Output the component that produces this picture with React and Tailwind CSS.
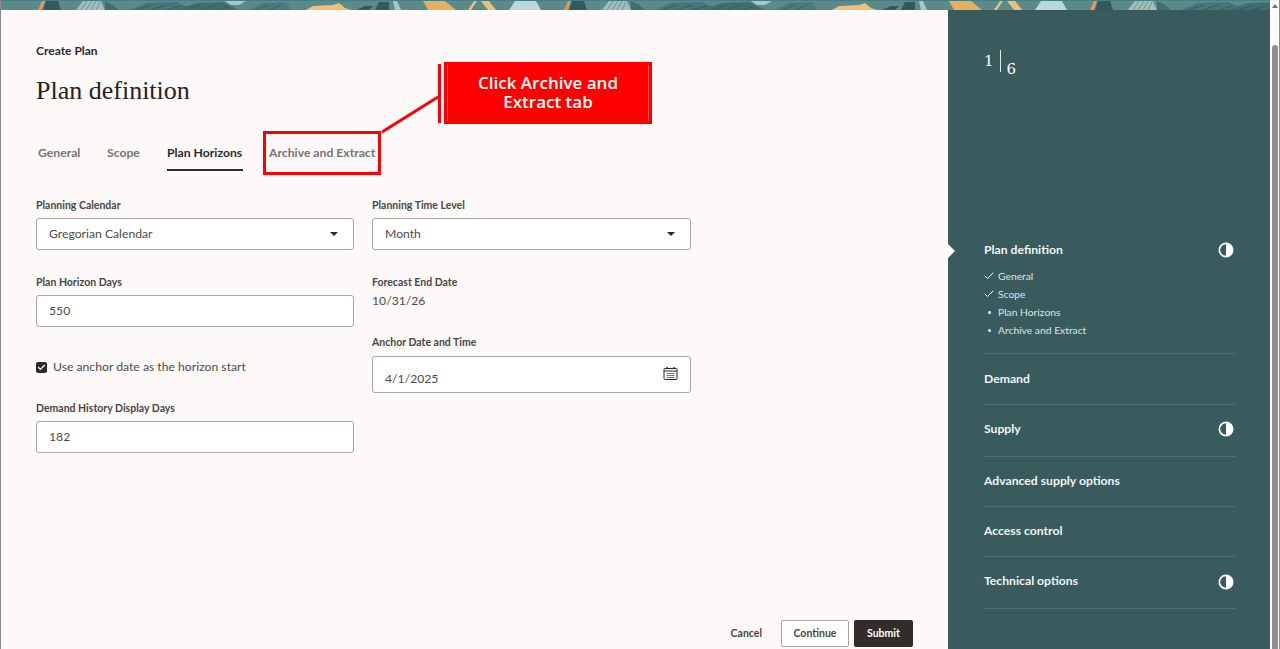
import { Check } from 'lucide-react';

const sans = "font-['Lato','Open_Sans',sans-serif]";

// the banner art repeats every 526px
function BannerTile({ x }) {
  return (
    <g transform={`translate(${x} 0)`}>
      <path d="M37 10 L41 1 L44 1 L41 10Z" fill="#e8935a" />
      <path d="M42 10 L45 1 L57 1 L60 10Z" fill="#2f5a5e" />
      <path d="M75 10 L82 1 L100 1 L104 10Z" fill="#a3bdbb" />
      <path d="M80 10 L86 1M85 10 L91 1M90 10 L95 1M95 10 L99 2" stroke="#6d9190" strokeWidth="1" />
      <path d="M104 1 L112 5 L118 10 L104 10Z" fill="#3f6e70" />
      <path d="M128 10 L145 3 L175 2 L195 10Z" fill="#46767a" />
      <path d="M135 10 L150 5M150 10 L165 5M165 10 L180 6" stroke="#2f5f62" strokeWidth="1" />
      <path d="M175 10 L195 3 L222 2 L238 10Z" fill="#3f6e70" />
      <path d="M185 10 L200 5M200 10 L215 5M215 10 L228 6" stroke="#2f5f62" strokeWidth="1" />
      <path d="M224 1 L245 1 L238 5 L230 5Z" fill="#a9c6c6" />
      <path d="M248 10 L262 3 L285 2 L290 10Z" fill="#4b7a7c" />
      <path d="M255 10 L268 5M268 10 L280 5" stroke="#33666a" strokeWidth="1" />
      <path d="M305 10 L312 6 L332 5 L338 3 L344 8 L350 10Z" fill="#edc07d" />
      <path d="M355 10 L364 6 L372 6 L368 10Z" fill="#2f5a5e" />
      <path d="M374 10 L378 2 L388 2 L388 10Z" fill="#2f5a5e" />
      <path d="M392 1 L396 1 L400 10 L394 10Z" fill="#a9c6c6" />
      <path d="M422 1 L444 1 L455 10 L427 10Z" fill="#e5b15f" />
      <path d="M467 10 L473 1 L476 1 L470 10Z" fill="#edc07d" />
      <path d="M480 1 L488 1 L495 10 L487 10Z" fill="#edc07d" />
      <path d="M508 10 L514 1 L535 1 L540 10Z" fill="#bcd7da" />
    </g>
  );
}

function Banner() {
  return (
    <svg width="1270" height="10" viewBox="0 0 1270 10" className="block shrink-0">
      <rect width="1270" height="10" fill="#5b8a88" />
      <BannerTile x={0} />
      <BannerTile x={526} />
      <BannerTile x={1052} />
      <rect width="1270" height="1" fill="#467f86" />
    </svg>
  );
}

function Field({ label, children, className = '' }) {
  return (
    <div className={className}>
      <div className="text-[10.5px] leading-[14px] font-bold text-[#4a4643] whitespace-nowrap">{label}</div>
      {children}
    </div>
  );
}

function InputBox({ children, className = 'h-[32px] mt-[6px]' }) {
  return (
    <div className={`w-full flex items-center justify-between pl-[12px] pr-[15px] bg-white border border-[#a9a5a1] rounded-[3px] text-[12.2px] text-[#4f4b48] ${className}`}>
      {children}
    </div>
  );
}

function Caret() {
  return <div className="w-0 h-0 border-l-[4px] border-r-[4px] border-t-[4px] border-l-transparent border-r-transparent border-t-[#2c2926]" />;
}

function Halfmoon() {
  return (
    <svg width="16" height="16" viewBox="0 0 16 16">
      <circle cx="8" cy="8" r="7.5" fill="#fff" />
      <path d="M8 2.2 A5.8 5.8 0 0 0 8 13.8Z" fill="#395b5e" />
    </svg>
  );
}

function Step({ title, half, className }) {
  return (
    <div className={`flex items-center justify-between border-b border-[#4d7174] pr-[1px] ${className}`}>
      <span className="ml-[1px] text-[12.2px] font-bold text-[#f1f5f4]">{title}</span>
      {half && <Halfmoon />}
    </div>
  );
}

const subSteps = [
  { name: 'General', done: true },
  { name: 'Scope', done: true },
  { name: 'Plan Horizons' },
  { name: 'Archive and Extract' },
];

export default function App() {
  return (
    <div className={`relative flex w-[1280px] h-[649px] overflow-hidden bg-white ${sans}`}>
      <div className="flex flex-col w-[1270px] h-full border-l border-[#8a8a8a]">
        <Banner />
        <div className="flex flex-1 min-h-0">
          {/* main form */}
          <main className="relative w-[947px] bg-[#fcf9f8] pl-[35px] pt-[34px]">
            <div className="text-[12px] leading-[14px] font-bold text-[#2c2926]">Create Plan</div>
            <h1 className="mt-[18px] font-['Liberation_Serif',serif] text-[26px] leading-[30px] text-[#24211f]">Plan definition</h1>

            <div className="flex mt-[29px] text-[12.2px] font-bold text-[#77736f] h-[36px]">
              <span className="ml-[2px] w-[69px] pt-[9px]">General</span>
              <span className="w-[60px] pt-[9px]">Scope</span>
              <span className="w-[76px] pt-[9px] text-[#2c2926] border-b-2 border-[#2c2926] whitespace-nowrap">Plan Horizons</span>
              <span className="ml-[26px] pt-[9px] whitespace-nowrap">Archive and Extract</span>
            </div>

            <div className="flex gap-[18px] mt-[27px]">
              <div className="w-[318px]">
                <Field label="Planning Calendar">
                  <InputBox>Gregorian Calendar<Caret /></InputBox>
                </Field>
                <Field label="Plan Horizon Days" className="mt-[25px]">
                  <InputBox>550</InputBox>
                </Field>
                <label className="flex items-center gap-[6px] mt-[32px] text-[12.2px] leading-[16px] text-[#4f4b48]">
                  <span className="flex items-center justify-center w-[11px] h-[11px] rounded-[2px] bg-[#2c2926]">
                    <Check size={9} strokeWidth={3.5} color="#fff" />
                  </span>
                  Use anchor date as the horizon start
                </label>
                <Field label="Demand History Display Days" className="mt-[26px]">
                  <InputBox>182</InputBox>
                </Field>
              </div>

              <div className="w-[319px]">
                <Field label="Planning Time Level">
                  <InputBox>Month<Caret /></InputBox>
                </Field>
                <Field label="Forecast End Date" className="mt-[25px]">
                  <div className="mt-[4px] text-[12.2px] leading-[16px] text-[#4f4b48]">10/31/26</div>
                </Field>
                <Field label="Anchor Date and Time" className="mt-[26px]">
                  <InputBox className="h-[37px] mt-[7px] !items-start !pr-[12px]">
                    <span className="mt-[13px]">4/1/2025</span>
                    <svg width="15" height="15" viewBox="0 0 15 15" className="mt-[9px]" fill="none" stroke="#2c2926">
                      <rect x="1" y="2.5" width="13" height="11" rx="1" />
                      <path d="M4 1v2M11 1v2" strokeWidth="1.4" />
                      <path d="M1 5h13" />
                      <path d="M3.5 7.5h8M3.5 9.5h8M3.5 11.5h8" stroke="#77726e" />
                    </svg>
                  </InputBox>
                </Field>
              </div>
            </div>

            <div className="absolute right-[35px] bottom-[2px] flex items-center text-[10.5px] font-bold text-[#4a4643]">
              <span className="mr-[19px]">Cancel</span>
              <span className="flex items-center justify-center w-[68px] h-[27px] mr-[5px] bg-white border border-[#a9a5a1] rounded-[2px]">Continue</span>
              <span className="flex items-center justify-center w-[59px] h-[27px] bg-[#312d2a] text-white rounded-[2px]">Submit</span>
            </div>
          </main>

          {/* wizard panel */}
          <aside className="relative flex-1 bg-[#395b5e] pl-[35px] pr-[35px]">
            <div className="flex items-start h-[32px] mt-[40px] text-white font-['DejaVu_Serif',serif] text-[15px]">
              <span className="leading-[24px] mt-[-1px] ml-[1px]">1</span>
              <span className="w-px h-[22px] bg-[#dfe7e6] mx-[6px]" />
              <span className="leading-[24px] mt-[7px]">6</span>
            </div>

            <div className="absolute left-0 top-[234px] w-0 h-0 border-y-[7px] border-l-[7px] border-y-transparent border-l-white" />

            <div className="mt-[159px] border-b border-[#4d7174] h-[113px]">
              <div className="flex items-center justify-between pr-[1px]">
                <span className="ml-[1px] text-[12.2px] font-bold text-[#f1f5f4]">Plan definition</span>
                <Halfmoon />
              </div>
              <ul className="mt-[8px] text-[10.3px] text-[#dbe4e3]">
                {subSteps.map((s) => (
                  <li key={s.name} className="flex items-center h-[18px]">
                    <span className="flex items-center w-[15px]">
                      {s.done
                        ? <Check size={12} strokeWidth={2} color="#fff" />
                        : <span className="w-[3px] h-[3px] ml-[5px] rounded-full bg-white" />}
                    </span>
                    {s.name}
                  </li>
                ))}
              </ul>
            </div>
            <Step title="Demand" className="h-[51px] pt-[1px]" />
            <Step title="Supply" half className="h-[52px] pb-[3px]" />
            <Step title="Advanced supply options" className="h-[50px]" />
            <Step title="Access control" className="h-[50px]" />
            <Step title="Technical options" half className="h-[52px] pb-[2px]" />
          </aside>
        </div>
      </div>

      {/* scrollbar */}
      <div className="relative w-[10px] h-full bg-white border-r border-[#8a8a8a]">
        <div className="ml-[2px] mt-[4px] w-0 h-0 border-x-[3px] border-b-[4px] border-x-transparent border-b-[#6f6f6f]" />
        <div className="ml-[2px] mt-[37px] w-[6px] h-[604px] rounded-t-full bg-[#8f8f8f]" />
      </div>

      {/* tutorial callout */}
      <div className="absolute left-[263px] top-[131px] w-[118px] h-[44px] border-[3px] border-[#ff0000]" />
      <svg width="64" height="40" className="absolute left-[378px] top-[94px]">
        <path d="M4 38 L60 3" stroke="#ff0000" strokeWidth="3" fill="none" />
      </svg>
      <div className="absolute left-[438px] top-[64px] w-[3px] h-[59px] bg-[#ff0000]" />
      <div className="absolute left-[444px] top-[62px] w-[208px] h-[62px] bg-[#ff0000] px-[3px] py-[3px]">
        <div className="flex items-center justify-center h-full pb-[2px] text-center text-white text-[17px] leading-[19px] font-semibold font-['Open_Sans',sans-serif] border-x border-[#ff5050]">
          Click Archive and<br />Extract tab
        </div>
      </div>
    </div>
  );
}
